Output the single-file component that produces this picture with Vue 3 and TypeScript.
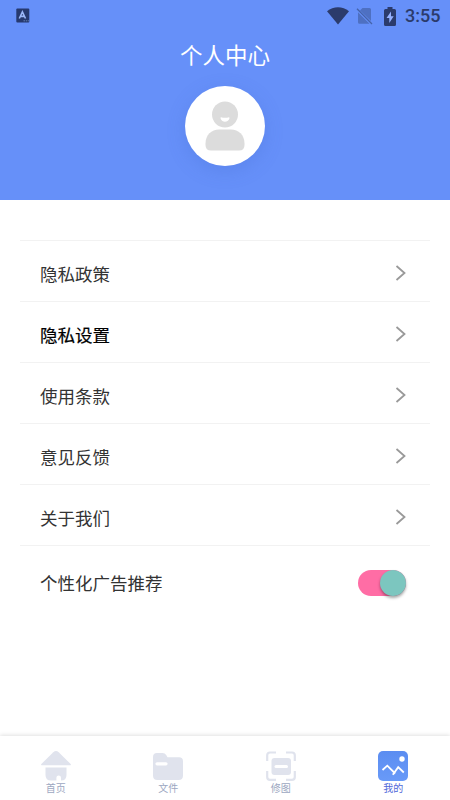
<script setup lang="ts">
import { ref } from 'vue'

interface MenuItem {
  label: string
  strong?: boolean
}

const menu: MenuItem[] = [
  { label: '隐私政策' },
  { label: '隐私设置', strong: true },
  { label: '使用条款' },
  { label: '意见反馈' },
  { label: '关于我们' },
]

const tabs = [
  { id: 'home', label: '首页' },
  { id: 'files', label: '文件' },
  { id: 'retouch', label: '修图' },
  { id: 'mine', label: '我的' },
]

const activeTab = ref('mine')
const personalizedAds = ref(true)
</script>

<template>
  <div class="screen">
    <header class="hero">
      <div class="status">
        <svg class="ime" width="14" height="15" viewBox="0 0 14 15">
          <rect x="0.3" y="0.5" width="13" height="14" rx="1" fill="#26396f" />
          <path d="M3.3 10.5 6.4 3.8 9.5 10.5M4.5 8.4H8.3" fill="none" stroke="#9bb7f8" stroke-width="1.6" />
          <path d="M7.5 12.8H13" stroke="#6482b5" stroke-width="1" stroke-dasharray="1.5 .8" />
        </svg>
        <div class="status-right">
          <svg class="wifi" width="22" height="18" viewBox="0 0 22 18">
            <path d="M0 4.2C6.5-1 15.5-1 22 4.2L11 17.6Z" fill="#2b3b6c" />
          </svg>
          <svg class="sim" width="17" height="18" viewBox="0 0 17 18">
            <path d="M6.5 1H13.5Q15 1 15 2.5V14L4 3.5ZM2 5.2 13.5 16.7H3.5Q2 16.7 2 15.2Z" fill="#4e70c2" />
            <path d="M1 1.8 16 17" stroke="#4563a9" stroke-width="1.3" />
          </svg>
          <svg class="battery" width="12" height="19" viewBox="0 0 12 19">
            <path d="M3.5 0H8.5V2H10.5Q12 2 12 3.5V17.5Q12 19 10.5 19H1.5Q0 19 0 17.5V3.5Q0 2 1.5 2H3.5Z" fill="#2b3b6c" />
            <path d="M7 4.5 2.5 11H5.3V16L9.7 9.2H7Z" fill="#94b1ff" />
          </svg>
          <span class="clock">3:55</span>
        </div>
      </div>
      <h1 class="title">个人中心</h1>
      <div class="avatar">
        <svg width="40" height="50" viewBox="0 0 40 50">
          <circle cx="20" cy="13.5" r="13" fill="#dcdcdc" />
          <path d="M.5 42.5C.5 34 6.5 28.5 14 28.5H26C33.5 28.5 39.5 34 39.5 42.5V44Q39.5 49.5 34 49.5H6Q.5 49.5.5 44Z" fill="#dcdcdc" />
          <path d="M16 16.2Q20 17.4 24 16.2Q24.8 16.4 24.4 17.5C22.8 21.8 17.2 21.8 15.6 17.5Q15.2 16.4 16 16.2Z" fill="#fff" />
        </svg>
      </div>
    </header>

    <main class="content">
      <ul class="menu">
        <li v-for="item in menu" :key="item.label" class="row" :class="{ strong: item.strong }">
          <span>{{ item.label }}</span>
          <svg class="chevron" width="12" height="16" viewBox="0 0 12 16">
            <path d="M1.5 1 9.5 8 1.5 15" fill="none" stroke="#999" stroke-width="1.8" />
          </svg>
        </li>
      </ul>
      <div class="row toggle-row">
        <span>个性化广告推荐</span>
        <button
          class="switch"
          :class="{ on: personalizedAds }"
          role="switch"
          :aria-checked="personalizedAds"
          @click="personalizedAds = !personalizedAds"
        >
          <i class="thumb"></i>
        </button>
      </div>
    </main>

    <nav class="tabs">
      <button
        v-for="tab in tabs"
        :key="tab.id"
        class="tab"
        :class="{ active: activeTab === tab.id }"
        @click="activeTab = tab.id"
      >
        <svg v-if="tab.id === 'home'" width="30" height="30" viewBox="0 0 30 30">
          <path d="M.5 14.2Q-.4 14 .6 12.8L12.3 1.2Q15-1.2 17.7 1.2L29.4 12.8Q30.4 14 29.5 14.2Z" fill="#e0e3ed" />
          <path d="M4.5 16.5H25.5V24Q25.5 29.5 20 29.5V26.8A2.3 2.3 0 0 0 15.4 26.8V29.5H10Q4.5 29.5 4.5 24Z" fill="#e0e3ed" />
        </svg>
        <svg v-else-if="tab.id === 'files'" width="30" height="30" viewBox="0 0 30 30">
          <path d="M0 6Q0 2 4 2H9.5Q12 2 13.2 4L14.5 6.2H26Q30 6.2 30 10.2V24.5Q30 29 25.5 29H4.5Q0 29 0 24.5Z" fill="#e0e3ed" />
          <path d="M4 12.8H13" stroke="#fff" stroke-width="3.2" stroke-linecap="round" />
        </svg>
        <svg v-else-if="tab.id === 'retouch'" width="30" height="30" viewBox="0 0 30 30">
          <path d="M10 1.5H4Q1.2 1.5 1.2 4.3V10M20 1.5H26Q28.8 1.5 28.8 4.3V10M1.2 20V26Q1.2 28.8 4 28.8H10M20 28.8H26Q28.8 28.8 28.8 26V20" fill="none" stroke="#e0e3ed" stroke-width="2.2" />
          <rect x="5.5" y="7" width="19.5" height="17" rx="3" fill="#e0e3ed" />
          <path d="M10 15.5H20.5" stroke="#fff" stroke-width="3" stroke-linecap="round" />
        </svg>
        <svg v-else width="30" height="30" viewBox="0 0 30 30">
          <defs>
            <linearGradient id="picture" x1="0" y1="0" x2="0" y2="1">
              <stop offset="0" stop-color="#5b8df1" />
              <stop offset="1" stop-color="#699af8" />
            </linearGradient>
          </defs>
          <rect width="30" height="30" rx="5" fill="url(#picture)" />
          <circle cx="24" cy="8" r="2.7" fill="#fff" />
          <path d="M4.5 19 9.3 14.7 17.2 22.5M14.8 23.8 20.2 16.2 25.8 21.5" fill="none" stroke="#fff" stroke-width="1.8" />
        </svg>
        <span>{{ tab.label }}</span>
      </button>
    </nav>
  </div>
</template>

<style>
body {
  margin: 0;
}
</style>

<style scoped>
.screen {
  width: 450px;
  height: 800px;
  display: flex;
  flex-direction: column;
  overflow: hidden;
  background: #fff;
  color: #333;
  font-family: "Noto Sans CJK SC", sans-serif;
}
.hero {
  flex: none;
  height: 200px;
  display: flex;
  flex-direction: column;
  align-items: center;
  background: #6690f9;
}
.status {
  width: 100%;
  height: 32px;
  box-sizing: border-box;
  padding: 0 10px 0 16px;
  display: flex;
  align-items: center;
  justify-content: space-between;
}
.status-right {
  display: flex;
  align-items: center;
  height: 30px;
}
.status svg {
  display: block;
}
.status .ime {
  margin-bottom: 2px;
}
.sim {
  margin-left: 7px;
}
.battery {
  margin-left: 11px;
}
.clock {
  width: 35px;
  margin-left: 9px;
  color: #2b3b6c;
  font: 500 18px/20px Roboto, sans-serif;
  white-space: nowrap;
}
.title {
  margin: 6px 0 15px;
  color: #fff;
  font-size: 22.5px;
  font-weight: 400;
  line-height: 33px;
}
.avatar {
  width: 80px;
  height: 80px;
  display: flex;
  align-items: center;
  justify-content: center;
  border-radius: 50%;
  background: #fff;
  box-shadow: 0 5px 18px rgba(65, 105, 205, 0.25);
}
.content {
  flex: 1;
  padding: 40px 20px 0;
}
.menu {
  margin: 0;
  padding: 0;
  list-style: none;
  border-top: 1px solid #f2f2f2;
}
.row {
  height: 61px;
  box-sizing: border-box;
  padding: 5px 23px 0 20px;
  display: flex;
  align-items: center;
  justify-content: space-between;
  border-bottom: 1px solid #f2f2f2;
  font-size: 17.5px;
}
.strong {
  color: #000;
  -webkit-text-stroke: 0.2px #000;
}
.chevron {
  margin-bottom: 1px;
}
.toggle-row {
  height: 74px;
  padding: 0 24px 0 20px;
  border: 0;
}
.toggle-row span {
  margin-bottom: 1px;
}
.switch {
  width: 48px;
  height: 26px;
  padding: 0;
  display: flex;
  border: 0;
  border-radius: 13px;
  background: #ccc;
}
.switch.on {
  justify-content: flex-end;
  background: #ff6da5;
}
.thumb {
  width: 26px;
  height: 26px;
  border-radius: 50%;
  background: #7cc6bf;
  box-shadow: 0 2px 3px rgba(0, 0, 0, 0.35);
}
.tabs {
  flex: none;
  height: 64px;
  display: grid;
  grid-template-columns: repeat(4, 1fr);
  background: #fff;
  box-shadow: 0 -1px 4px rgba(0, 0, 0, 0.12);
}
.tab {
  padding: 15px 1px 0 0;
  display: flex;
  flex-direction: column;
  align-items: center;
  border: 0;
  background: none;
  color: #9ca7c1;
  font-family: inherit;
  font-size: 10px;
  line-height: 14px;
}
.tab svg {
  display: block;
}
.tab.active {
  color: #5068d9;
}
</style>
